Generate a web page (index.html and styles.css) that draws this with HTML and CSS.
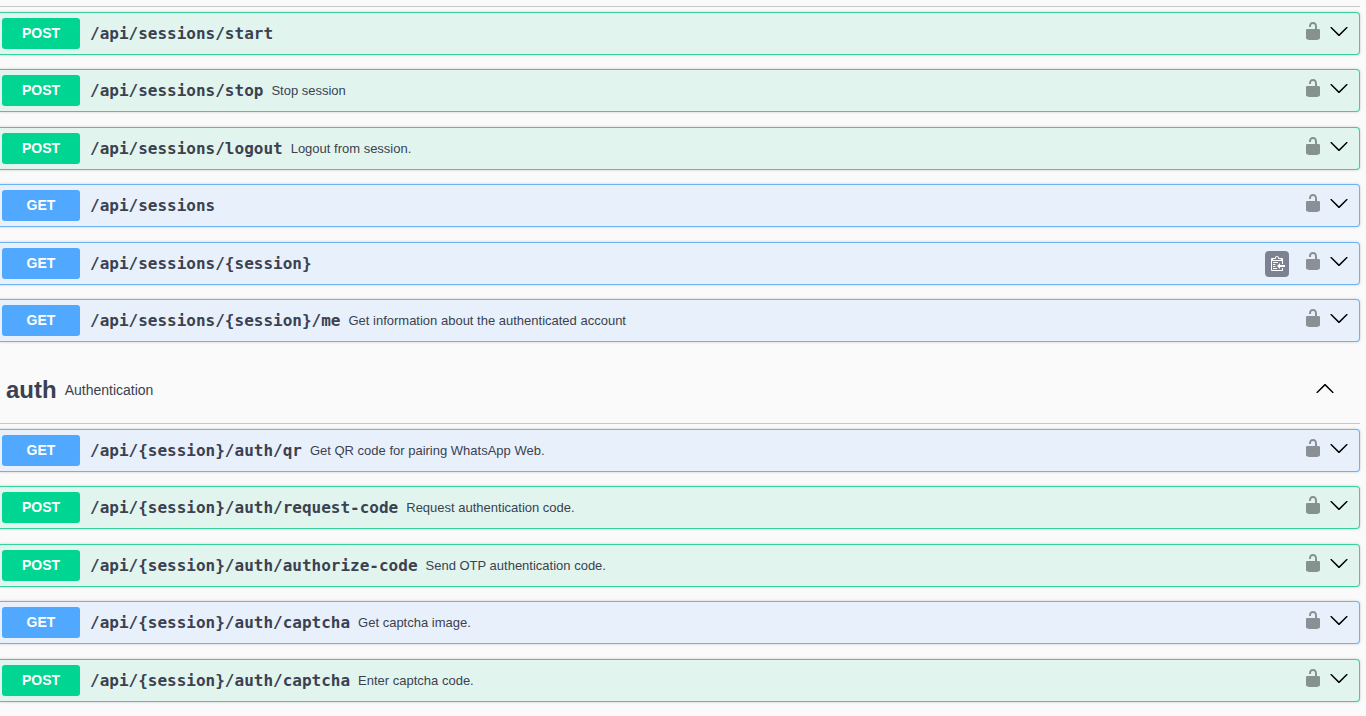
FILE: index.html
```html
<!DOCTYPE html>
<html lang="en">
<head>
<meta charset="utf-8">
<title>API sessions</title>
<link rel="stylesheet" href="styles.css">
</head>
<body>
<svg class="defs" aria-hidden="true">
  <symbol id="unlocked" viewBox="0 0 20 20"><path d="M15.8 8H14V5.6C14 2.703 12.665 1 10 1 7.334 1 6 2.703 6 5.6V6h2v-.801C8 3.754 8.797 3 10 3c1.203 0 2 .754 2 2.199V8H4c-.553 0-1 .646-1 1.199V17c0 .549.428 1.139.951 1.307l1.197.387C5.672 18.861 6.55 19 7.1 19h5.8c.549 0 1.428-.139 1.951-.307l1.196-.387c.524-.167.953-.757.953-1.306V9.199C17 8.646 16.352 8 15.8 8z"/></symbol>
  <symbol id="down" viewBox="0 0 20 20"><path d="M17.418 6.109c.272-.268.709-.268.979 0s.271.701 0 .969l-7.908 7.83c-.27.268-.707.268-.979 0l-7.908-7.83c-.27-.268-.27-.701 0-.969.271-.268.709-.268.979 0L10 13.25z"/></symbol>
  <symbol id="up" viewBox="0 0 20 20"><path d="M17.418 14.908c.272.268.709.268.979 0s.271-.701 0-.969l-7.908-7.83c-.27-.268-.707-.268-.979 0l-7.908 7.83c-.27.268-.27.701 0 .969.271.268.709.268.979 0L10 7.767z"/></symbol>
  <symbol id="copy" viewBox="1 0 15 16"><path d="M4 12h4v1H4v-1zm5-6H4v1h5V6zm2 3V7l-3 3 3 3v-2h5V9h-5zM6.5 8H4v1h2.5V8zM4 11h2.5v-1H4v1zm9 1h1v2c-.02.28-.11.52-.3.7-.19.18-.42.28-.7.3H3c-.55 0-1-.45-1-1V3c0-.55.45-1 1-1h3c0-1.11.89-2 2-2 1.11 0 2 .89 2 2h3c.55 0 1 .45 1 1v5h-1V5H3v9h10v-2zM4 4h8c0-.55-.45-1-1-1h-1c-.55 0-1-.45-1-1s-.45-1-1-1-1 .45-1 1-.45 1-1 1H5c-.55 0-1 .45-1 1z"/></symbol>
</svg>
<main class="api">
  <section class="tag">
    <div class="tag-edge"></div>
    <ul class="ops">
      <li class="op post"><button class="summary"><span class="method">POST</span><span class="path">/api/sessions/start</span></button><button class="auth" aria-label="Authorize"><svg><use href="#unlocked"/></svg></button><button class="toggle" aria-label="Expand"><svg><use href="#down"/></svg></button></li>
      <li class="op post"><button class="summary"><span class="method">POST</span><span class="path">/api/sessions/stop</span><span class="desc">Stop session</span></button><button class="auth" aria-label="Authorize"><svg><use href="#unlocked"/></svg></button><button class="toggle" aria-label="Expand"><svg><use href="#down"/></svg></button></li>
      <li class="op post"><button class="summary"><span class="method">POST</span><span class="path">/api/sessions/logout</span><span class="desc">Logout from session.</span></button><button class="auth" aria-label="Authorize"><svg><use href="#unlocked"/></svg></button><button class="toggle" aria-label="Expand"><svg><use href="#down"/></svg></button></li>
      <li class="op get"><button class="summary"><span class="method">GET</span><span class="path">/api/sessions</span></button><button class="auth" aria-label="Authorize"><svg><use href="#unlocked"/></svg></button><button class="toggle" aria-label="Expand"><svg><use href="#down"/></svg></button></li>
      <li class="op get"><button class="summary"><span class="method">GET</span><span class="path">/api/sessions/{session}</span></button><button class="copy" aria-label="Copy path"><svg><use href="#copy"/></svg></button><button class="auth" aria-label="Authorize"><svg><use href="#unlocked"/></svg></button><button class="toggle" aria-label="Expand"><svg><use href="#down"/></svg></button></li>
      <li class="op get"><button class="summary"><span class="method">GET</span><span class="path">/api/sessions/{session}/me</span><span class="desc">Get information about the authenticated account</span></button><button class="auth" aria-label="Authorize"><svg><use href="#unlocked"/></svg></button><button class="toggle" aria-label="Expand"><svg><use href="#down"/></svg></button></li>
    </ul>
  </section>
  <section class="tag">
    <header class="tag-head"><h3 class="tag-name">auth</h3><p class="tag-desc">Authentication</p><button class="toggle" aria-label="Collapse"><svg><use href="#up"/></svg></button></header>
    <ul class="ops">
      <li class="op get"><button class="summary"><span class="method">GET</span><span class="path">/api/{session}/auth/qr</span><span class="desc">Get QR code for pairing WhatsApp Web.</span></button><button class="auth" aria-label="Authorize"><svg><use href="#unlocked"/></svg></button><button class="toggle" aria-label="Expand"><svg><use href="#down"/></svg></button></li>
      <li class="op post"><button class="summary"><span class="method">POST</span><span class="path">/api/{session}/auth/request-code</span><span class="desc">Request authentication code.</span></button><button class="auth" aria-label="Authorize"><svg><use href="#unlocked"/></svg></button><button class="toggle" aria-label="Expand"><svg><use href="#down"/></svg></button></li>
      <li class="op post"><button class="summary"><span class="method">POST</span><span class="path">/api/{session}/auth/authorize-code</span><span class="desc">Send OTP authentication code.</span></button><button class="auth" aria-label="Authorize"><svg><use href="#unlocked"/></svg></button><button class="toggle" aria-label="Expand"><svg><use href="#down"/></svg></button></li>
      <li class="op get"><button class="summary"><span class="method">GET</span><span class="path">/api/{session}/auth/captcha</span><span class="desc">Get captcha image.</span></button><button class="auth" aria-label="Authorize"><svg><use href="#unlocked"/></svg></button><button class="toggle" aria-label="Expand"><svg><use href="#down"/></svg></button></li>
      <li class="op post"><button class="summary"><span class="method">POST</span><span class="path">/api/{session}/auth/captcha</span><span class="desc">Enter captcha code.</span></button><button class="auth" aria-label="Authorize"><svg><use href="#unlocked"/></svg></button><button class="toggle" aria-label="Expand"><svg><use href="#down"/></svg></button></li>
    </ul>
  </section>
</main>
</body>
</html>
```

FILE: styles.css
```css
* { box-sizing: border-box; }

body {
  margin: 0;
  background: #fafafa;
  color: #3b4151;
  font-family: "Liberation Sans", Arial, sans-serif;
}

button {
  margin: 0;
  padding: 0;
  border: 0;
  background: none;
  color: inherit;
  font: inherit;
  cursor: pointer;
}

svg { display: block; width: 20px; height: 20px; }
.defs { position: absolute; width: 0; height: 0; }

.api { padding: 6px 6px 14px 0; }
.tag-edge { border-top: 1px solid #c8c9ce; }

.ops { margin: 0; padding: 5px 0 0; list-style: none; }

.op {
  display: flex;
  align-items: center;
  padding: 5px 10px 5px 2px;
  border: 1px solid;
  border-left: 0;
  border-radius: 0 4px 4px 0;
  box-shadow: 0 0 3px rgba(0, 0, 0, 0.19);
}
.op:nth-child(odd) { margin-bottom: 14px; }
.op:nth-child(even) { margin-bottom: 15px; }
.op:last-child { margin-bottom: 0; }
.post { border-color: #35d29b; background: #e1f5ee; }
.get { border-color: #6db2f5; background: #e8f1fb; }

.summary {
  display: flex;
  flex: 1;
  align-items: center;
  text-align: left;
}
.method {
  width: 78px;
  margin-right: 10px;
  border-radius: 3px;
  color: #fff;
  font-weight: 700;
  font-size: 14px;
  line-height: 31px;
  text-align: center;
}
.post .method { background: #00d591; }
.get .method { background: #50a8ff; }
.path { font: 700 16px/20px "DejaVu Sans Mono", monospace; }
.desc { margin-left: 8px; font-size: 13px; line-height: 20px; }

.copy {
  display: grid;
  place-items: center;
  width: 24px;
  height: 26px;
  margin-right: 14px;
  border-radius: 4px;
  background: #7d8293;
}
.copy svg { width: 15px; height: 16px; fill: #fff; }
.auth { padding-bottom: 5px; opacity: 0.4; }
.toggle { margin-left: 6px; padding-bottom: 5px; }

.tag-head {
  display: flex;
  align-items: center;
  gap: 8px;
  padding: 30px 25px 15px 6px;
  border-bottom: 1px solid #c8c9ce;
}
.tag-name { margin: 0; font-weight: 700; font-size: 24px; line-height: 36px; }
.tag-desc { flex: 1; margin: 0; font-size: 14px; line-height: 20px; }
```
